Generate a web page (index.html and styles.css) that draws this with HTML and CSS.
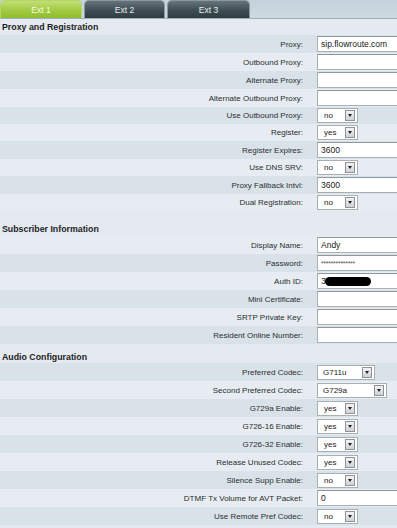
FILE: index.html
```html
<!DOCTYPE html>
<html>
<head>
<meta charset="utf-8">
<link rel="stylesheet" href="styles.css">
</head>
<body>
<div class="tabs">
  <div class="tab active">Ext 1</div>
  <div class="tab">Ext 2</div>
  <div class="tab t3">Ext 3</div>
</div>
<div class="page">
  <div class="head h1">Proxy and Registration</div>
  <div class="sec">
    <div class="row d"><span class="lbl">Proxy:</span><span class="inp">sip.flowroute.com</span></div>
    <div class="row l"><span class="lbl">Outbound Proxy:</span><span class="inp"></span></div>
    <div class="row d"><span class="lbl">Alternate Proxy:</span><span class="inp"></span></div>
    <div class="row l"><span class="lbl">Alternate Outbound Proxy:</span><span class="inp"></span></div>
    <div class="row d sm"><span class="lbl">Use Outbound Proxy:</span><span class="sel w41"><span class="val">no</span><span class="arr"></span></span></div>
    <div class="row l sm"><span class="lbl">Register:</span><span class="sel w41"><span class="val">yes</span><span class="arr"></span></span></div>
    <div class="row d"><span class="lbl">Register Expires:</span><span class="inp">3600</span></div>
    <div class="row l sm"><span class="lbl">Use DNS SRV:</span><span class="sel w41"><span class="val">no</span><span class="arr"></span></span></div>
    <div class="row d"><span class="lbl">Proxy Fallback Intvl:</span><span class="inp">3600</span></div>
    <div class="row l sm"><span class="lbl">Dual Registration:</span><span class="sel w41"><span class="val">no</span><span class="arr"></span></span></div>
  </div>
  <div class="head h2">Subscriber Information</div>
  <div class="sec">
    <div class="row l"><span class="lbl">Display Name:</span><span class="inp">Andy</span></div>
    <div class="row d"><span class="lbl">Password:</span><span class="inp pw">**************</span></div>
    <div class="row l"><span class="lbl">Auth ID:</span><span class="inp">3<span class="redact"></span></span></div>
    <div class="row d"><span class="lbl">Mini Certificate:</span><span class="inp"></span></div>
    <div class="row l"><span class="lbl">SRTP Private Key:</span><span class="inp"></span></div>
    <div class="row d"><span class="lbl">Resident Online Number:</span><span class="inp"></span></div>
  </div>
  <div class="head h3">Audio Configuration</div>
  <div class="sec">
    <div class="row d"><span class="lbl">Preferred Codec:</span><span class="sel w58"><span class="val">G711u</span><span class="arr"></span></span></div>
    <div class="row l"><span class="lbl">Second Preferred Codec:</span><span class="sel w70"><span class="val">G729a</span><span class="arr"></span></span></div>
    <div class="row d"><span class="lbl">G729a Enable:</span><span class="sel w41"><span class="val">yes</span><span class="arr"></span></span></div>
    <div class="row l"><span class="lbl">G726-16 Enable:</span><span class="sel w41"><span class="val">yes</span><span class="arr"></span></span></div>
    <div class="row d"><span class="lbl">G726-32 Enable:</span><span class="sel w41"><span class="val">yes</span><span class="arr"></span></span></div>
    <div class="row l"><span class="lbl">Release Unused Codec:</span><span class="sel w41"><span class="val">yes</span><span class="arr"></span></span></div>
    <div class="row d"><span class="lbl">Silence Supp Enable:</span><span class="sel w41"><span class="val">no</span><span class="arr"></span></span></div>
    <div class="row l"><span class="lbl">DTMF Tx Volume for AVT Packet:</span><span class="inp">0</span></div>
    <div class="row d"><span class="lbl">Use Remote Pref Codec:</span><span class="sel w41"><span class="val">no</span><span class="arr"></span></span></div>
  </div>
</div>
</body>
</html>
```

FILE: styles.css
```css
html, body {
  margin: 0;
  padding: 0;
}
body {
  width: 397px;
  height: 528px;
  overflow: hidden;
  background: #e3e9ef;
  font-family: "Liberation Sans", Arial, sans-serif;
  color: #222;
}
.tabs {
  display: flex;
  gap: 2px;
  height: 19px;
  align-items: flex-end;
  background: linear-gradient(#c4d2db, #cdd9e1);
  border-bottom: 1px solid #9fb0bb;
  box-sizing: border-box;
}
.tab {
  width: 81px;
  height: 18px;
  box-sizing: border-box;
  border-radius: 5px 5px 0 0;
  background: linear-gradient(#66757b, #3f4e55 55%, #2d3b41);
  border: 1px solid #8a989e;
  border-bottom: none;
  color: #e8eef0;
  font-size: 8.5px;
  display: flex;
  align-items: center;
  justify-content: center;
}
.tab.t3 { width: 83px; }
.tab.active {
  width: 82px;
  background: linear-gradient(#c2df78, #a5cd45 50%, #8fbd2d);
  border-color: #b6d56a;
  color: #f6fbe8;
}
.page {
  display: flex;
  flex-direction: column;
}
.head {
  font-weight: bold;
  font-size: 8.8px;
  padding-left: 2px;
  display: flex;
  align-items: flex-end;
  box-sizing: border-box;
  color: #1e2426;
  background: #e4eaf0;
}
.h1 { height: 16px; padding-bottom: 3px; }
.h2 { height: 25px; padding-bottom: 2px; }
.h3 { height: 19px; padding-bottom: 1px; }
.sec {
  display: flex;
  flex-direction: column;
}
.row {
  height: 18px;
  display: grid;
  grid-template-columns: 303px 80px;
  column-gap: 14px;
  align-items: center;
  font-size: 8px;
}
.row.sm { height: 17px; }
.row.d { background: #dae2e9; }
.row.l { background: #e6ecf1; }
.lbl {
  text-align: right;
  color: #2a2e30;
  white-space: nowrap;
}
.inp {
  height: 16px;
  width: 80px;
  box-sizing: border-box;
  background: #fff;
  border: 1px solid #a9b0b4;
  border-top-color: #8e979c;
  border-right: none;
  padding-left: 3px;
  font-size: 8.5px;
  color: #1a1a1a;
  display: flex;
  align-items: center;
  overflow: hidden;
  white-space: nowrap;
}
.pw {
  font-size: 7px;
  letter-spacing: -0.3px;
  color: #555;
}
.redact {
  display: inline-block;
  width: 46px;
  height: 9px;
  background: #000;
  border-radius: 5px;
  margin-left: -1px;
}
.sel {
  height: 15px;
  box-sizing: border-box;
  background: #fff;
  border: 1px solid #a9b0b4;
  display: flex;
  align-items: center;
  justify-content: space-between;
  padding: 0 2px 0 6px;
  font-size: 8px;
  color: #1a1a1a;
}
.w41 { width: 41px; }
.w58 { width: 58px; padding-left: 5px; }
.w70 { width: 70px; padding-left: 5px; }
.arr {
  width: 10px;
  height: 11px;
  box-sizing: border-box;
  border: 1px solid #8c9498;
  background: linear-gradient(#f2f2f2, #cfd3d6);
  position: relative;
}
.arr::after {
  content: "";
  position: absolute;
  left: 2px;
  top: 3px;
  border-left: 2.5px solid transparent;
  border-right: 2.5px solid transparent;
  border-top: 3px solid #222;
}
```
